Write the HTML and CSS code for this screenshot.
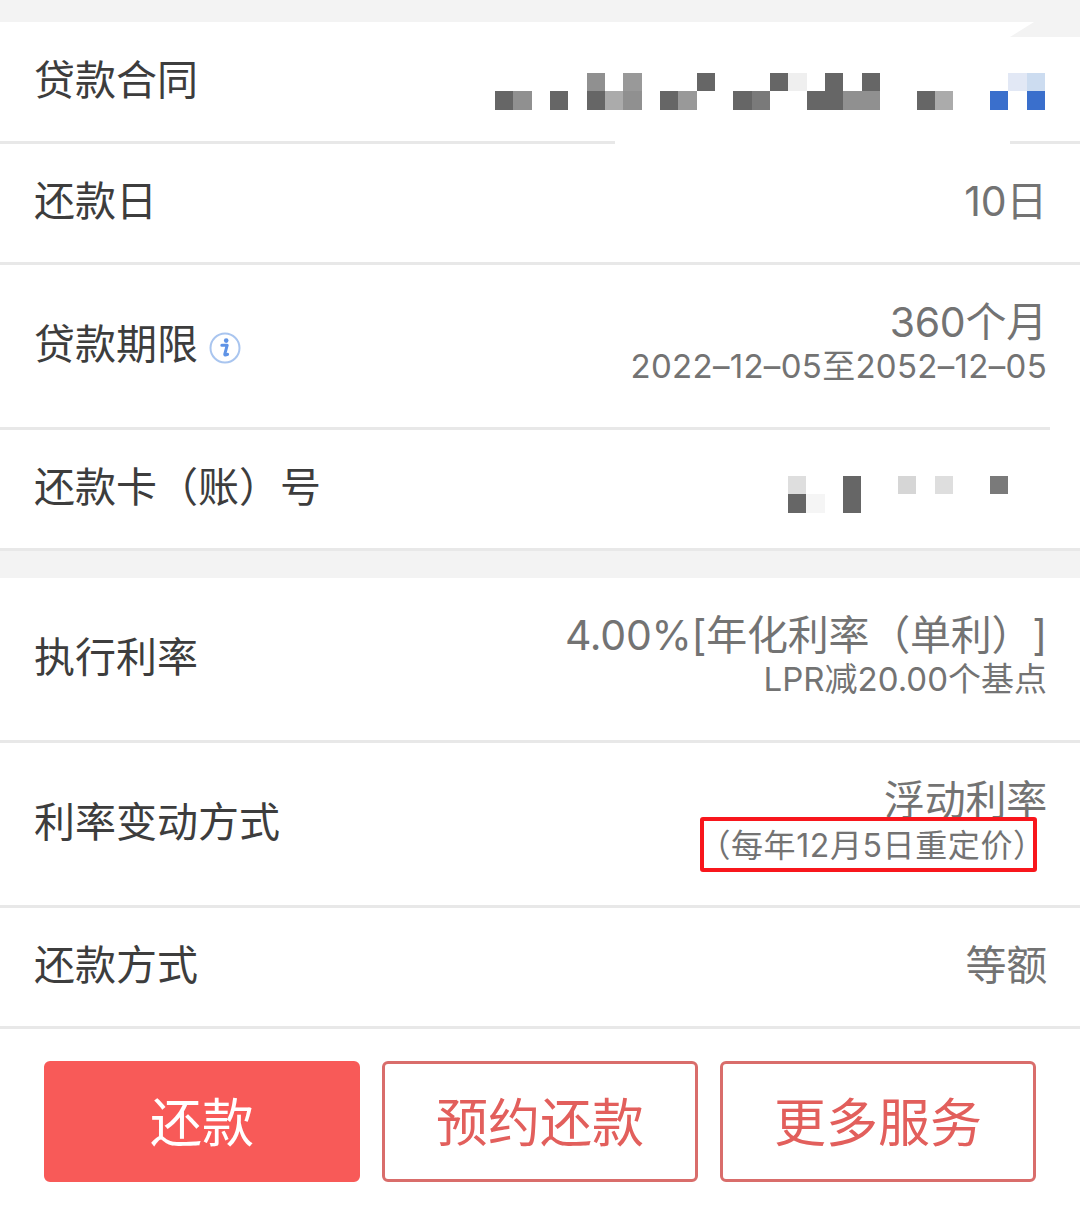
FILE: index.html
```html
<!DOCTYPE html>
<html lang="zh-CN">
<head>
<meta charset="utf-8">
<title>贷款详情</title>
<link rel="stylesheet" href="styles.css">
</head>
<body>
<main class="page">
  <section class="group group-first">
    <div class="wedge"></div>
    <div class="row row-contract">
      <span class="label">贷款合同</span>
      <div class="mosaic mosaic-long">
        <i></i><i></i><i></i><i></i><i></i><i class="g2"></i><i></i><i class="g3"></i><i></i><i></i><i></i><i class="d"></i><i></i><i></i><i></i><i class="d"></i><i class="l0"></i><i></i><i class="d"></i><i></i><i class="d"></i><i></i><i></i><i></i><i></i><i></i><i></i><i></i><i class="b1"></i><i class="b2"></i>
        <i class="d"></i><i class="g2"></i><i></i><i class="d"></i><i></i><i class="d"></i><i class="g4"></i><i class="g2"></i><i></i><i class="d"></i><i class="g3"></i><i></i><i></i><i class="d"></i><i class="g1"></i><i></i><i></i><i class="d"></i><i class="d"></i><i class="g2"></i><i class="g2"></i><i></i><i></i><i class="d"></i><i class="g4"></i><i></i><i></i><i class="b"></i><i></i><i class="b"></i>
      </div>
    </div>
    <div class="row row-short">
      <span class="label">还款日</span>
      <div class="value"><div class="main">10日</div></div>
    </div>
    <div class="row row-tall row-term">
      <span class="label label-icon">贷款期限
        <svg class="info" viewBox="0 0 32 32" aria-hidden="true">
          <circle cx="16" cy="16" r="14.5" fill="none" stroke="#a9c5ef" stroke-width="2"/>
          <circle cx="17.2" cy="8.6" r="2.3" fill="#5f93e6"/>
          <path d="M12.8 13.2h5.4l-2.4 9c-.2.9.6 1.2 2.8.2" fill="none" stroke="#5f93e6" stroke-width="3" stroke-linecap="round" stroke-linejoin="round"/>
        </svg>
      </span>
      <div class="value">
        <div class="main">360个月</div>
        <div class="sub sub-date">2022–12–05至2052–12–05</div>
      </div>
    </div>
    <div class="row row-short row-last">
      <span class="label">还款卡（账）号</span>
      <div class="mosaic mosaic-short">
        <i class="l2"></i><i></i><i></i><i class="d"></i><i></i><i></i><i class="l3"></i><i></i><i class="l2"></i><i></i><i></i><i class="g1"></i>
        <i class="d"></i><i class="l1"></i><i></i><i class="d"></i><i></i><i></i><i></i><i></i><i></i><i></i><i></i><i></i>
      </div>
    </div>
  </section>
  <section class="group">
    <div class="row row-tall">
      <span class="label">执行利率</span>
      <div class="value">
        <div class="main">4.00%[年化利率（单利）]</div>
        <div class="sub">LPR减20.00个基点</div>
      </div>
    </div>
    <div class="row row-tall">
      <span class="label">利率变动方式</span>
      <div class="value value-note">
        <div class="main">浮动利率</div>
        <div class="sub sub-hidden">每年</div>
        <div class="note">（每年12月5日重定价）</div>
      </div>
    </div>
    <div class="row row-short">
      <span class="label">还款方式</span>
      <div class="value"><div class="main">等额</div></div>
    </div>
  </section>
  <footer class="actions">
    <button class="btn btn-primary" type="button">还款</button>
    <button class="btn" type="button">预约还款</button>
    <button class="btn" type="button">更多服务</button>
  </footer>
</main>
</body>
</html>
```
FILE: styles.css
```css
* { box-sizing: border-box; }
html, body { margin: 0; padding: 0; }
body {
  width: 1080px;
  height: 1215px;
  overflow: hidden;
  background: #fff;
  font-family: Inter, "Noto Sans CJK SC", sans-serif;
  text-spacing-trim: space-all;
}
.page { display: flex; flex-direction: column; padding-top: 22px; background: #f3f3f3; }
.group { position: relative; background: #fff; }
.group-first { margin-bottom: 27px; }
.wedge {
  position: absolute;
  z-index: 1;
  top: 0;
  right: 0;
  width: 70px;
  height: 15px;
  background: #f3f3f3;
  clip-path: polygon(24px 0, 100% 0, 100% 100%, 0 100%);
}
.row {
  position: relative;
  display: flex;
  align-items: center;
  justify-content: space-between;
  padding: 0 33px 4px 34px;
  border-bottom: 3px solid #e8e8e8;
  background: #fff;
}
.row-short { height: 121px; }
.row-contract { height: 122px; padding-bottom: 3px; }
.row-tall { height: 165px; }
.row-contract::after {
  content: "";
  position: absolute;
  left: 615px;
  bottom: -3px;
  width: 395px;
  height: 3px;
  background: #fff;
}
.row-term::after {
  content: "";
  position: absolute;
  right: 0;
  bottom: -3px;
  width: 30px;
  height: 3px;
  background: #fff;
}
.label {
  font-size: 41px;
  line-height: 48px;
  color: #3d3d3d;
  white-space: nowrap;
}
.label-icon { display: flex; align-items: center; gap: 11px; }
.info { width: 32px; height: 32px; margin-top: 7px; }
.value { display: flex; flex-direction: column; align-items: flex-end; text-align: right; }
.main { font-size: 41px; line-height: 44px; color: #737373; white-space: nowrap; letter-spacing: -0.25px; }
.sub { font-size: 33px; line-height: 44px; color: #737373; white-space: nowrap; }
.sub-date { letter-spacing: 0.3px; }
.value-note { position: relative; }
.sub-hidden { visibility: hidden; }
.note {
  position: absolute;
  top: 39px;
  right: 10px;
  width: 337px;
  height: 55px;
  display: flex;
  align-items: center;
  justify-content: center;
  padding: 0 0 4px 7px;
  border: 4px solid #f8161c;
  border-radius: 3px;
  background: #fff;
  font-size: 32px;
  letter-spacing: 0.6px;
  color: #737373;
  white-space: nowrap;
}
.mosaic {
  display: grid;
  grid-template-rows: 18px 19px;
  grid-auto-rows: 19px;
}
.mosaic-long {
  width: 550px;
  grid-template-columns: repeat(30, 1fr);
  margin: 5px 2px 0 0;
  position: relative;
  top: 9px;
}
.mosaic-short {
  width: 220px;
  grid-template-columns: repeat(12, 1fr);
  margin: 0 39px 0 0;
  position: relative;
  top: 7px;
}
.mosaic i { display: block; }
.d { background: #666; }
.g1 { background: #7a7a7a; }
.g2 { background: #909090; }
.g3 { background: #999; }
.g4 { background: #ababab; }
.l0 { background: #efefef; }
.l1 { background: #f5f5f5; }
.l2 { background: #dedede; }
.l3 { background: #d6d6d6; }
.b { background: #3a6fcc; }
.b1 { background: #e2e8f5; }
.b2 { background: #ccdcf0; }
.actions {
  display: flex;
  gap: 22px;
  height: 188px;
  padding: 32px 44px 33px;
  background: #fff;
}
.btn {
  flex: 1 1 0;
  height: 121px;
  padding: 0 0 4px;
  border: 3px solid #d96d6b;
  border-radius: 6px;
  background: #fff;
  color: #e25f5c;
  font-family: inherit;
  font-size: 52px;
}
.btn-primary { border-color: #f85a58; background: #f85a58; color: #fff; }
```
